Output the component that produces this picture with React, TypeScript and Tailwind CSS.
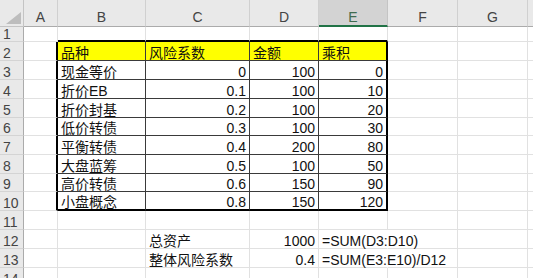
import React from 'react'

const cols = ['A', 'B', 'C', 'D', 'E', 'F', 'G', 'H']
const tableCols = ['B', 'C', 'D', 'E']

const rows = [1, 2, 3, 4, 5, 6, 7, 8, 9, 10, 11, 12, 13, 14]

interface Cell {
  text: string
  align?: 'left' | 'right'
  overflow?: boolean
}

const data: { [key: string]: Cell } = {
  B2: { text: '品种' },
  C2: { text: '风险系数' },
  D2: { text: '金额' },
  E2: { text: '乘积' },
  B3: { text: '现金等价' },
  B4: { text: '折价EB' },
  B5: { text: '折价封基' },
  B6: { text: '低价转债' },
  B7: { text: '平衡转债' },
  B8: { text: '大盘蓝筹' },
  B9: { text: '高价转债' },
  B10: { text: '小盘概念' },
  C12: { text: '总资产' },
  C13: { text: '整体风险系数' },
  D12: { text: '1000', align: 'right' },
  D13: { text: '0.4', align: 'right' },
  E12: { text: '=SUM(D3:D10)', overflow: true },
  E13: { text: '=SUM(E3:E10)/D12', overflow: true },
}

const numbers: [string, string, string][] = [
  ['0', '100', '0'],
  ['0.1', '100', '10'],
  ['0.2', '100', '20'],
  ['0.3', '100', '30'],
  ['0.4', '200', '80'],
  ['0.5', '100', '50'],
  ['0.6', '150', '90'],
  ['0.8', '150', '120'],
]
numbers.forEach(([c, d, e], i) => {
  const r = i + 3
  data['C' + r] = { text: c, align: 'right' }
  data['D' + r] = { text: d, align: 'right' }
  data['E' + r] = { text: e, align: 'right' }
})

function rightBorder(r: number, c: string) {
  const inTable = r >= 2 && r <= 10
  if (inTable && (c === 'A' || c === 'E')) return 'border-r-2 border-r-black'
  if (inTable && (c === 'B' || c === 'C' || c === 'D')) return 'border-r border-r-[#3a3a3a]'
  if (c === 'E' && (r === 12 || r === 13)) return 'border-r border-r-transparent'
  return 'border-r border-r-[#e1e1e1]'
}

function bottomBorder(r: number, c: string) {
  if (!tableCols.includes(c)) return 'border-b border-b-[#e1e1e1]'
  if (r === 1 || r === 10) return 'border-b-2 border-b-black'
  if (r >= 2 && r <= 9) return 'border-b border-b-[#3a3a3a]'
  return 'border-b border-b-[#e1e1e1]'
}

export default function App() {
  return (
    <main
      className="w-[533px] h-[278px] overflow-hidden bg-white text-[14px] text-[#111]"
      style={{ fontFamily: '"Liberation Sans", "Noto Sans CJK SC", sans-serif' }}
    >
      <div className="grid grid-cols-[24px_34px_88px_104px_69px_69px_70px_70px_70px] grid-rows-[27px_15px_19px_19px_19px_19px_18px_19px_19px_18px_19px_19px_19px_19px_19px]">
        {/* Corner */}
        <div className="bg-[#e9e9e9] border-r border-b border-[#c4c4c4] flex items-end justify-end pb-[2px] pr-[2px]">
          <svg width="15" height="12" viewBox="0 0 15 12">
            <polygon points="15,0 15,12 0,12" fill="#bdbdbd" />
          </svg>
        </div>

        {/* Column headers */}
        {cols.map((c) =>
          c === 'E' ? (
            <div
              key={c}
              className="bg-[#d3d3d3] border-r border-r-[#c4c4c4] border-b-2 border-b-[#217346] flex items-end justify-center leading-none pb-[1px] text-[#3f6b4f]"
            >
              {c}
            </div>
          ) : (
            <div
              key={c}
              className="bg-[#e9e9e9] border-r border-r-[#d0d0d0] border-b border-b-[#ababab] flex items-end justify-center leading-none pb-[2px] text-[#444]"
            >
              {c}
            </div>
          )
        )}

        {rows.map((r) => (
          <React.Fragment key={r}>
            <div className="bg-[#e9e9e9] border-r border-r-[#ababab] border-b border-b-[#d4d4d4] flex items-end leading-none pl-[3px] text-[#444]">
              {r}
            </div>
            {cols.map((c) => {
              const cell = data[c + r]
              const yellow = r === 2 && tableCols.includes(c)
              return (
                <div
                  key={c}
                  className={`flex items-end leading-none whitespace-nowrap ${rightBorder(r, c)} ${bottomBorder(r, c)} ${
                    yellow ? 'bg-[#ffff00]' : ''
                  } ${cell?.align === 'right' ? 'justify-end pr-[3px]' : 'justify-start pl-[3px]'} ${
                    cell?.overflow ? 'overflow-visible relative z-10' : 'overflow-hidden'
                  }`}
                >
                  {cell?.text}
                </div>
              )
            })}
          </React.Fragment>
        ))}
      </div>
    </main>
  )
}
